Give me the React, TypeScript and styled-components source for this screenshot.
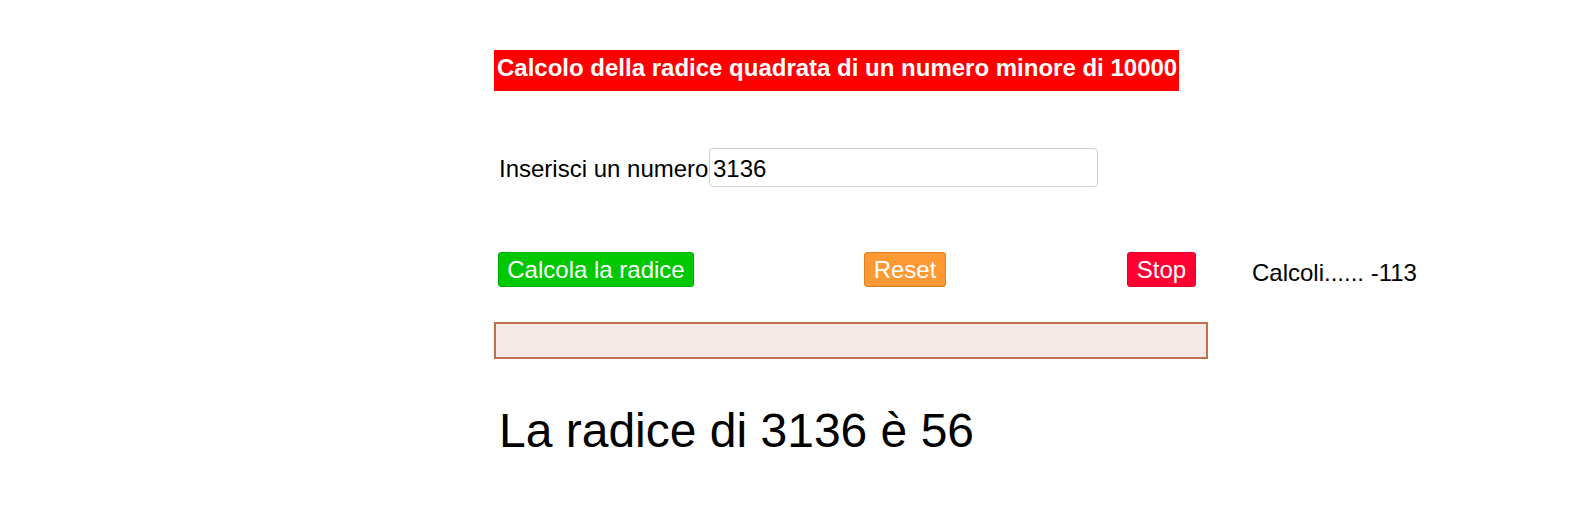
import styled, { createGlobalStyle } from "styled-components";

const GlobalStyle = createGlobalStyle`
  body {
    margin: 0;
    background: #ffffff;
    font-family: "Liberation Sans", Arial, sans-serif;
  }
`;

const Page = styled.div`
  width: 1590px;
  height: 525px;
  padding: 50px 0 0 494px;
  box-sizing: border-box;
  display: flex;
  flex-direction: column;
  align-items: flex-start;
`;

const Title = styled.div`
  background: #ff0000;
  color: #ffffff;
  font-weight: bold;
  font-size: 24px;
  height: 41px;
  line-height: 36px;
  padding: 0 3px;
  width: 685px;
  box-sizing: border-box;
  white-space: nowrap;
`;

const InputRow = styled.div`
  margin-top: 57px;
  display: flex;
  align-items: center;
  height: 39px;
`;

const Label = styled.span`
  font-size: 24px;
  color: #000;
  padding-left: 5px;
  margin-top: 2px;
  width: 215px;
  box-sizing: border-box;
  white-space: nowrap;
`;

const NumberInput = styled.input`
  width: 389px;
  height: 39px;
  box-sizing: border-box;
  border: 1px solid #d0d0d0;
  border-radius: 4px;
  font-family: "Liberation Sans", Arial, sans-serif;
  font-size: 24px;
  padding: 2px 3px 0;
  color: #000;
  outline: none;
`;

const ButtonRow = styled.div`
  margin-top: 65px;
  display: flex;
  align-items: center;
  padding-left: 4px;
`;

const Button = styled.button<{ $bg: string; $border: string; $w: number; $gap: number }>`
  background: ${(p) => p.$bg};
  border: 1px solid ${(p) => p.$border};
  border-radius: 3px;
  color: #ffffff;
  font-family: "Liberation Sans", Arial, sans-serif;
  font-size: 24px;
  width: ${(p) => p.$w}px;
  height: 35px;
  padding: 0;
  margin-right: ${(p) => p.$gap}px;
  white-space: nowrap;
  cursor: pointer;
`;

const Status = styled.span`
  font-size: 24px;
  color: #000;
  margin-top: 7px;
  white-space: nowrap;
`;

const Progress = styled.div`
  margin-top: 35px;
  width: 714px;
  height: 37px;
  box-sizing: border-box;
  border: 2px solid #c0704c;
  background: #f4e9e4;
`;

const Result = styled.div`
  margin-top: 44px;
  padding-left: 5px;
  font-size: 48px;
  color: #000;
  white-space: nowrap;
`;

export default function App() {
  return (
    <>
      <GlobalStyle />
      <Page>
        <Title>Calcolo della radice quadrata di un numero minore di 10000</Title>
        <InputRow>
          <Label>Inserisci un numero</Label>
          <NumberInput defaultValue="3136" />
        </InputRow>
        <ButtonRow>
          <Button $bg="#00c800" $border="#00b000" $w={196} $gap={170}>
            Calcola la radice
          </Button>
          <Button $bg="#ff9933" $border="#e08020" $w={82} $gap={181}>
            Reset
          </Button>
          <Button $bg="#ff0033" $border="#e0002a" $w={69} $gap={56}>
            Stop
          </Button>
          <Status>Calcoli...... -113</Status>
        </ButtonRow>
        <Progress />
        <Result>La radice di 3136 è 56</Result>
      </Page>
    </>
  );
}
